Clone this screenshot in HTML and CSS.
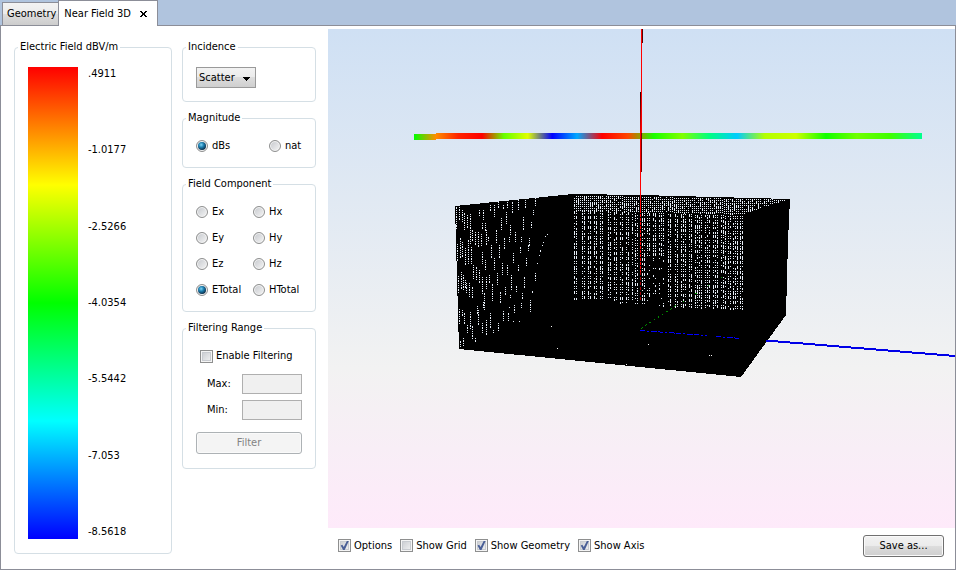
FILE: index.html
```html
<!DOCTYPE html>
<html lang="en">
<head>
<meta charset="utf-8">
<title>Near Field 3D</title>
<link rel="stylesheet" href="styles.css">
</head>
<body>
<div class="app">
  <nav class="tabs">
    <button type="button" class="tab">Geometry</button>
    <div class="tab tab-active">
      <span>Near Field 3D</span>
      <button type="button" class="close" aria-label="Close tab">
        <svg viewBox="0 0 7 6" width="7" height="6" shape-rendering="crispEdges"><path d="M0 0h2v1h1v1h1v-1h1v-1h2v1h-1v1h-1v2h1v1h1v1h-2v-1h-1v-1h-1v1h-1v1h-2v-1h1v-1h1v-2h-1v-1h-1z"/></svg>
      </button>
    </div>
  </nav>
  <main class="panel">
    <fieldset class="group legend-group">
      <legend>Electric Field dBV/m</legend>
      <div class="scale">
        <div class="ramp"></div>
        <div class="ticks">
          <span>.4911</span><span>-1.0177</span><span>-2.5266</span><span>-4.0354</span><span>-5.5442</span><span>-7.053</span><span>-8.5618</span>
        </div>
      </div>
    </fieldset>
    <div class="controls">
      <fieldset class="group">
        <legend>Incidence</legend>
        <div class="body">
          <div class="drop">
            <select aria-label="Incidence"><option>Scatter</option></select>
            <svg class="arrow" viewBox="0 0 7 4" width="7" height="4" shape-rendering="crispEdges"><path d="M0 0h7v1h-1v1h-1v1h-1v1h-1v-1h-1v-1h-1v-1h-1z"/></svg>
          </div>
        </div>
      </fieldset>
      <fieldset class="group">
        <legend>Magnitude</legend>
        <div class="body pair">
          <label class="choice"><input type="radio" name="mag" checked>dBs</label>
          <label class="choice"><input type="radio" name="mag">nat</label>
        </div>
      </fieldset>
      <fieldset class="group">
        <legend>Field Component</legend>
        <div class="body components">
          <label class="choice"><input type="radio" name="comp">Ex</label>
          <label class="choice"><input type="radio" name="comp">Hx</label>
          <label class="choice"><input type="radio" name="comp">Ey</label>
          <label class="choice"><input type="radio" name="comp">Hy</label>
          <label class="choice"><input type="radio" name="comp">Ez</label>
          <label class="choice"><input type="radio" name="comp">Hz</label>
          <label class="choice"><input type="radio" name="comp" checked>ETotal</label>
          <label class="choice"><input type="radio" name="comp">HTotal</label>
        </div>
      </fieldset>
      <fieldset class="group">
        <legend>Filtering Range</legend>
        <div class="body filter">
          <label class="choice check enable"><input type="checkbox">Enable Filtering</label>
          <div class="range">
            <label for="max">Max:</label><input id="max" type="text" disabled>
            <label for="min">Min:</label><input id="min" type="text" disabled>
          </div>
          <button type="button" class="btn" disabled>Filter</button>
        </div>
      </fieldset>
    </div>
    <section class="view">
      <svg class="scene" viewBox="328 29 627 499" preserveAspectRatio="none" role="img" aria-label="Field over geometry">
        <defs>
          <linearGradient id="field" gradientUnits="userSpaceOnUse" x1="414" x2="922" y1="0" y2="0">
            <stop offset="0" stop-color="#00ff00"/><stop offset=".043" stop-color="#ff8c00"/>
            <stop offset=".087" stop-color="#ff2400"/><stop offset=".134" stop-color="#ff0000"/>
            <stop offset=".177" stop-color="#66ff00"/><stop offset=".224" stop-color="#e0ff00"/>
            <stop offset=".272" stop-color="#0000ff"/><stop offset=".321" stop-color="#00a8ff"/>
            <stop offset=".37" stop-color="#ff0000"/><stop offset=".421" stop-color="#ff4600"/>
            <stop offset=".472" stop-color="#1aff00"/><stop offset=".528" stop-color="#80ff00"/>
            <stop offset=".581" stop-color="#00ff80"/><stop offset=".636" stop-color="#00ccff"/>
            <stop offset=".691" stop-color="#b4ff00"/><stop offset=".752" stop-color="#ccff00"/>
            <stop offset=".811" stop-color="#11ff00"/><stop offset=".872" stop-color="#70ff00"/>
            <stop offset=".937" stop-color="#40ff00"/><stop offset="1" stop-color="#00ff90"/>
          </linearGradient>
          <linearGradient id="dim" x1="0" x2="0" y1="0" y2="1"><stop offset="0" stop-color="#200"/><stop offset="1" stop-color="#e00"/></linearGradient>
        </defs>
        <g shape-rendering="crispEdges">
          <path fill="url(#field)" d="M414 134h22v-1h486v6h-486v1h-22z"/>
          <path d="M455 206L573 194L640 195L790 199L788 240L786 315L741 377L459 349z"/>
          <path id="holes" fill="#e6edf6"/>
          <path fill="#f3f3f3" d="M551 326h1v1h-1zM557 348h1v1h-1zM648 344h1v1h-1zM709 355h1v1h-1zM711 355h1v1h-1zM626 364h1v1h-1z"/>
          <path fill="#f00" d="M641 29h1v110h-1zM640 130h1v80h-1z"/>
          <path fill="url(#dim)" d="M640 92h1v40h-1z"/>
          <path fill="#500" d="M642 29h1v14h-1z"/>
          <path fill="#700" d="M641 133h1v39h-1z"/>
          <path stroke="#f00" stroke-dasharray="3 1" d="M640.500 210V272"/>
          <path stroke="#a00000" stroke-dasharray="3 2" d="M640.500 272V300"/>
          <path stroke="#008a00" stroke-dasharray="2 3" d="M641 328.500L676 305.500"/>
          <path stroke="#00a000" stroke-dasharray="1 14" d="M683 302L728 273"/>
          <path stroke="#00f" stroke-dasharray="5 2 2 2 6 1" d="M640 330.500L707 335.500M716 336.500L741 338.500"/>
          <path stroke="#0000e8" stroke-width="2" d="M766 340.500L955 356"/>
        </g>
      </svg>
      <div class="options">
        <label class="choice check"><input type="checkbox" checked>Options</label>
        <label class="choice check"><input type="checkbox">Show Grid</label>
        <label class="choice check"><input type="checkbox" checked>Show Geometry</label>
        <label class="choice check"><input type="checkbox" checked>Show Axis</label>
        <button type="button" class="btn save">Save as...</button>
      </div>
    </section>
  </main>
</div>
<script src="scene.js"></script>
</body>
</html>
```
FILE: scene.js
```js
// Openings between the mesh lines, where the background shows through.
const left = [
  [16,27,50],[17,64,80],[18,96,113],[19,129,145],[19,27,40],[20,58,78],[21,92,108],[20,161,168],
  [22,30,42],[22,62,78],[23,95,110],[22,130,137],[23,158,166],[24,33,50],[25,68,85],[25,100,107],[24,133,145],
  [27,35,47],[28,60,84],[26,103,114],[27,145,154],[30,34,64],[31,67,84],[29,103,117],[30,132,150],
  [32,50,60],[33,85,100],[32,107,117],[32,146,160],[35,52,65],[36,87,100],[37,126,134],[35,158,161],
  [39,30,37],[38,52,67],[39,90,104],[38,130,144],[41,54,67],[42,43,50],[42,72,85],[42,97,114],[43,122,129],[42,143,153],
  [43,30,40],[45,43,50],[46,50,64],[45,80,90],[46,97,110],[44,113,130],[46,140,155],
  [50,25,32],[48,57,62],[51,65,79],[49,95,104],[52,104,121],[50,133,149],[53,150,153],
  [54,25,37],[56,50,63],[54,78,91],[57,93,106],[58,22,27],[61,38,51],[59,65,79],[62,83,96],[60,112,124],[58,143,151],
  [63,25,28],[66,32,44],[64,58,69],[67,85,96],[65,107,115],[63,131,141],
  [67,22,28],[70,45,56],[69,57,63],[73,73,84],[71,95,110],[70,115,119],[68,133,141],[69,127,129],
  [72,22,32],[75,52,63],[78,85,92],[76,106,112],[74,125,134],[73,141,143],
  [78,20,30],[83,37,50],[81,57,63],[80,67,74],[86,78,87],[84,97,107],[82,113,119],[81,123,129],[79,141,142],
  [85,20,27],[89,58,65],[88,65,71],[95,93,102],[92,111,112],[90,120,133],
  [95,18,26],[93,30,36],[91,42,48],[107,54,55],[105,56,58],[103,62,63],[102,65,66],[100,70,71],[99,75,76],[97,83,84]
];
let d = "";
const dot = (x, y, h = 1) => { d += `M${x} ${y}h1v${h}h-1z`; };
for (const [x, a, b] of left)
  for (let y = a, i = 0; y < b; i++) {
    const h = (x + i) % 4 === 0 ? 2 : 1;
    dot(440 + x, 180 + y, h);
    y += h + 1;
  }
const rand = (x, y) => { const v = Math.sin(x * 12.9898 + y * 78.233) * 43758.5453; return v - Math.floor(v); };
// Far edge strip
for (let x = 574; x < 786; x += 2) {
  const top = 196 + Math.floor((x - 574) / 50);
  const bottom = x < 743 ? 210 + (x - 574) / 42 : 214 - (x - 743) / 3;
  for (let y = top; y < bottom; y += 2)
    if (rand(x, y) > 0.08) dot(x, y, rand(y, x) > 0.82 ? 2 : 1);
}
// Back wall
const cols = [574,576,582,584,588,590,594,596,600,602,608,610,614,616,620,622,626,628,632,635,637,642,644,647,649,
  653,655,659,661,663,668,670,675,677,681,683,685,689,691,695,697,699,701,705,707,709,713,715,717,721,723,725,728,730,733,735,737,740,742];
for (const x of cols) {
  const shift = Math.floor((x - 574) / 30);
  for (let y = 211 + shift; y < 299 + (x - 574) / 14; y++) {
    const r = (y - shift - 211) % 10;
    if (r !== 0 && r !== 2 && r !== 5 && r !== 7) continue;
    const sparse = x > 646 && x < 667 && y > 256;
    if (rand(x, y) > (sparse ? 0.7 : 0.12)) dot(x, y, rand(y, x) > 0.65 ? 2 : 1);
  }
}
document.getElementById("holes").setAttribute("d", d);
```
FILE: styles.css
```css
* { box-sizing: border-box; }
body {
  margin: 0;
  font: 11px/14px "DejaVu Sans Condensed", "DejaVu Sans", sans-serif;
  color: #000;
  background: #fff;
}
button, input, select { font: inherit; color: inherit; margin: 0; }
.app { display: flex; flex-direction: column; min-height: 100vh; }
.tabs {
  display: flex;
  align-items: flex-end;
  height: 26px;
  padding-left: 2px;
  background: #b0c4de;
  border-bottom: 1px solid #8c8e98;
}
.tab {
  height: 23px;
  padding: 0 2px 0 4px;
  border: 1px solid #8c8e98;
  border-bottom: 0;
  background: linear-gradient(#f3f3f3, #ebebeb 50%, #dddddd 50%, #cdcdcd);
}
.tab-active {
  display: flex;
  align-items: center;
  gap: 9px;
  height: 26px;
  margin: 0 0 -1px -1px;
  padding: 0 10px 0 5px;
  background: #fff;
}
.close { display: flex; padding: 0; border: 0; background: none; }
.panel {
  flex: 1;
  display: flex;
  padding: 3px 0 0 13px;
  border: 1px solid #8c8e98;
  border-top: 0;
}
.group {
  min-width: 0;
  margin: 0;
  padding: 0;
  border: 1px solid #d5dfe5;
  border-radius: 4px;
}
.group legend { margin-left: 3px; padding: 0 2px; }
.legend-group {
  display: flex;
  flex-direction: column;
  width: 158px;
  margin: 11px 10px 15px 0;
}
.scale { display: flex; gap: 10px; height: 100%; padding: 13px 13px 14px; }
.ramp {
  width: 50px;
  background: linear-gradient(#f00, #ff0 25%, #0f0 50%, #0ff 75%, #00f);
}
.ticks { display: flex; flex-direction: column; justify-content: space-between; }
.controls {
  display: flex;
  flex-direction: column;
  gap: 9px;
  width: 134px;
  margin: 11px 12px 0 0;
}
.body { padding: 13px; }
.choice { display: flex; align-items: center; gap: 4px; height: 16px; white-space: nowrap; }
.check { gap: 3px; }
.pair { display: grid; grid-template-columns: 73px auto; }
.components { display: grid; grid-template-columns: 57px auto; row-gap: 10px; }
input[type="radio"], input[type="checkbox"] {
  appearance: none;
  flex: none;
  display: grid;
  place-items: center;
  width: 12px;
  height: 12px;
  border: 1px solid #8e8f8f;
  background: linear-gradient(135deg, #c4c7cc, #f6f6f6);
  box-shadow: inset 0 0 0 1px #f4f4f4;
}
input[type="radio"] { border-radius: 50%; }
input[type="radio"]:checked::before {
  content: "";
  width: 8px;
  height: 8px;
  border-radius: 50%;
  background: radial-gradient(circle at 40% 35%, #7fd4f5, #1c7fb0 35%, #0b2c48 75%);
}
input[type="checkbox"] { width: 13px; height: 13px; box-shadow: inset 0 0 0 1px #f4f4f4, inset 0 0 0 2px #c8cbd0; }
input[type="checkbox"]:checked::before {
  content: "";
  width: 9px;
  height: 9px;
  background: #4a5f97;
  clip-path: polygon(8% 50%, 26% 42%, 42% 66%, 76% 0, 98% 0, 52% 100%, 34% 100%);
}
.drop { position: relative; width: 60px; }
.drop select {
  display: block;
  appearance: none;
  width: 100%;
  height: 21px;
  padding: 0 0 0 2px;
  border: 1px solid #9a9a9a;
  border-radius: 0;
  background: linear-gradient(#f2f2f2, #ebebeb 50%, #dddddd 50%, #cfcfcf);
}
.arrow { position: absolute; right: 6px; top: 10px; }
.filter { display: flex; flex-direction: column; padding-bottom: 14px; }
.enable { margin-left: 4px; }
.range {
  display: grid;
  grid-template-columns: 35px 60px;
  gap: 6px 0;
  align-items: center;
  margin: 10px 0 12px 11px;
}
.range input {
  width: 100%;
  height: 20px;
  border: 1px solid #afafaf;
  background: #f0f0f0;
}
.btn {
  height: 22px;
  padding: 0 13px;
  border: 1px solid #707070;
  border-radius: 3px;
  box-shadow: inset 0 0 0 1px #fafafa;
  background: linear-gradient(#f2f2f2, #ebebeb 50%, #dddddd 50%, #cfcfcf);
}
.btn:disabled { color: #838383; border-color: #adb2b5; background: #f4f4f4; }
.view { flex: 1; min-width: 0; display: flex; flex-direction: column; }
.scene {
  flex: 1 1 0;
  display: block;
  width: 100%;
  min-height: 0;
  background: linear-gradient(#cfe0f4, #f2f2f2 68%, #feeafa);
}
.options { display: flex; align-items: center; gap: 8px; height: 41px; padding: 0 11px 6px 10px; }
.save { min-width: 81px; margin-left: auto; }
```
